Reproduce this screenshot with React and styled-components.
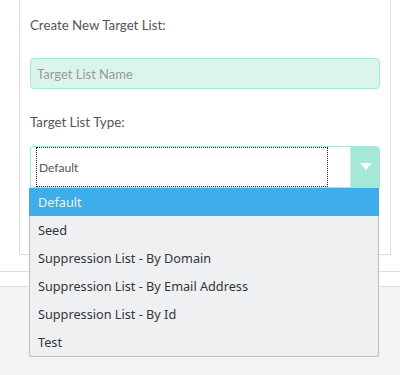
import styled, { createGlobalStyle } from 'styled-components';

const GlobalStyle = createGlobalStyle`
  html, body {
    margin: 0;
    padding: 0;
    background: #f4f4f4;
  }
  #root {
    width: 400px;
    height: 375px;
    overflow: hidden;
  }
`;

const Page = styled.div`
  position: relative;
  width: 400px;
  height: 375px;
  background: #f4f4f4;
  font-family: Lato, 'Liberation Sans', sans-serif;
`;

const Body = styled.div`
  background: #fff;
  border-bottom: 1px solid #ddd;
  height: 272px;
  padding: 0 9px 0 19px;
  box-sizing: border-box;
`;

const FooterStrip = styled.div`
  height: 14px;
  background: #fff;
  border-bottom: 1px solid #ddd;
`;

const Panel = styled.div`
  width: 372px;
  height: 255px;
  box-sizing: border-box;
  border: 1px solid #ddd;
  border-top: none;
  padding: 16px 9px 0 10px;
`;

const Label = styled.div`
  font-size: 13.3px;
  color: #555;
  line-height: 18px;
  margin-bottom: ${(p) => p.$gap}px;
`;

const TextInput = styled.input`
  display: block;
  width: 350px;
  height: 31px;
  box-sizing: border-box;
  margin: 0 0 24px;
  padding: 0 6px;
  background: #d9f5ee;
  border: 1px solid #a5e8d6;
  border-radius: 4px;
  font-family: Lato, 'Liberation Sans', sans-serif;
  font-size: 13px;
  color: #555;
  outline: none;
  &::placeholder {
    color: #9a9a9a;
  }
`;

const SelectBox = styled.div`
  display: flex;
  width: 350px;
  height: 42px;
  box-sizing: border-box;
  border: 1px solid #a5e8d6;
  border-right: none;
  border-radius: 4px 4px 0 0;
  background: #fff;
  overflow: hidden;
`;

const SelectValue = styled.div`
  flex: 1;
  display: flex;
  align-items: center;
  padding-left: 5px;
`;

const FocusRing = styled.div`
  width: 292px;
  height: 40px;
  box-sizing: border-box;
  border: 1px dotted #222;
  display: flex;
  align-items: center;
  padding-left: 2px;
  font-size: 12px;
  color: #57525c;
`;

const ArrowBox = styled.div`
  width: 29px;
  background: #a5e8d6;
  border-left: 1px solid #c9f2e6;
  display: flex;
  align-items: center;
  justify-content: center;
  border-radius: 0 4px 0 0;
`;

const Menu = styled.ul`
  position: absolute;
  left: 29px;
  top: 188px;
  width: 350px;
  margin: 0;
  padding: 0;
  list-style: none;
  box-sizing: border-box;
  background: #eff0f1;
  border: 1px solid #bcbebf;
  border-top: none;
  border-radius: 0 0 3px 3px;
  font-family: 'Noto Sans', 'Open Sans', sans-serif;
  font-size: 12.7px;
`;

const Option = styled.li`
  height: 28px;
  line-height: 28px;
  color: ${(p) => (p.$active ? '#eff0f1' : '#31363b')};
  background: ${(p) => (p.$active ? '#3daee9' : 'transparent')};
  margin: ${(p) => (p.$active ? '0 -1px' : '0')};
  padding-left: ${(p) => (p.$active ? '9px' : '8px')};
`;

const options = [
  'Default',
  'Seed',
  'Suppression List - By Domain',
  'Suppression List - By Email Address',
  'Suppression List - By Id',
  'Test',
];

export default function App() {
  return (
    <Page>
      <GlobalStyle />
      <Body>
        <Panel>
          <Label $gap={24}>Create New Target List:</Label>
          <TextInput placeholder="Target List Name" readOnly />
          <Label $gap={15}>Target List Type:</Label>
          <SelectBox>
            <SelectValue>
              <FocusRing>Default</FocusRing>
            </SelectValue>
            <ArrowBox>
              <svg width="12" height="8" viewBox="0 0 12 8">
                <path d="M0 0 L12 0 L6 7 Z" fill="#fff" />
              </svg>
            </ArrowBox>
          </SelectBox>
        </Panel>
      </Body>
      <FooterStrip />
      <Menu>
        {options.map((o, i) => (
          <Option key={o} $active={i === 0}>
            {o}
          </Option>
        ))}
      </Menu>
    </Page>
  );
}
